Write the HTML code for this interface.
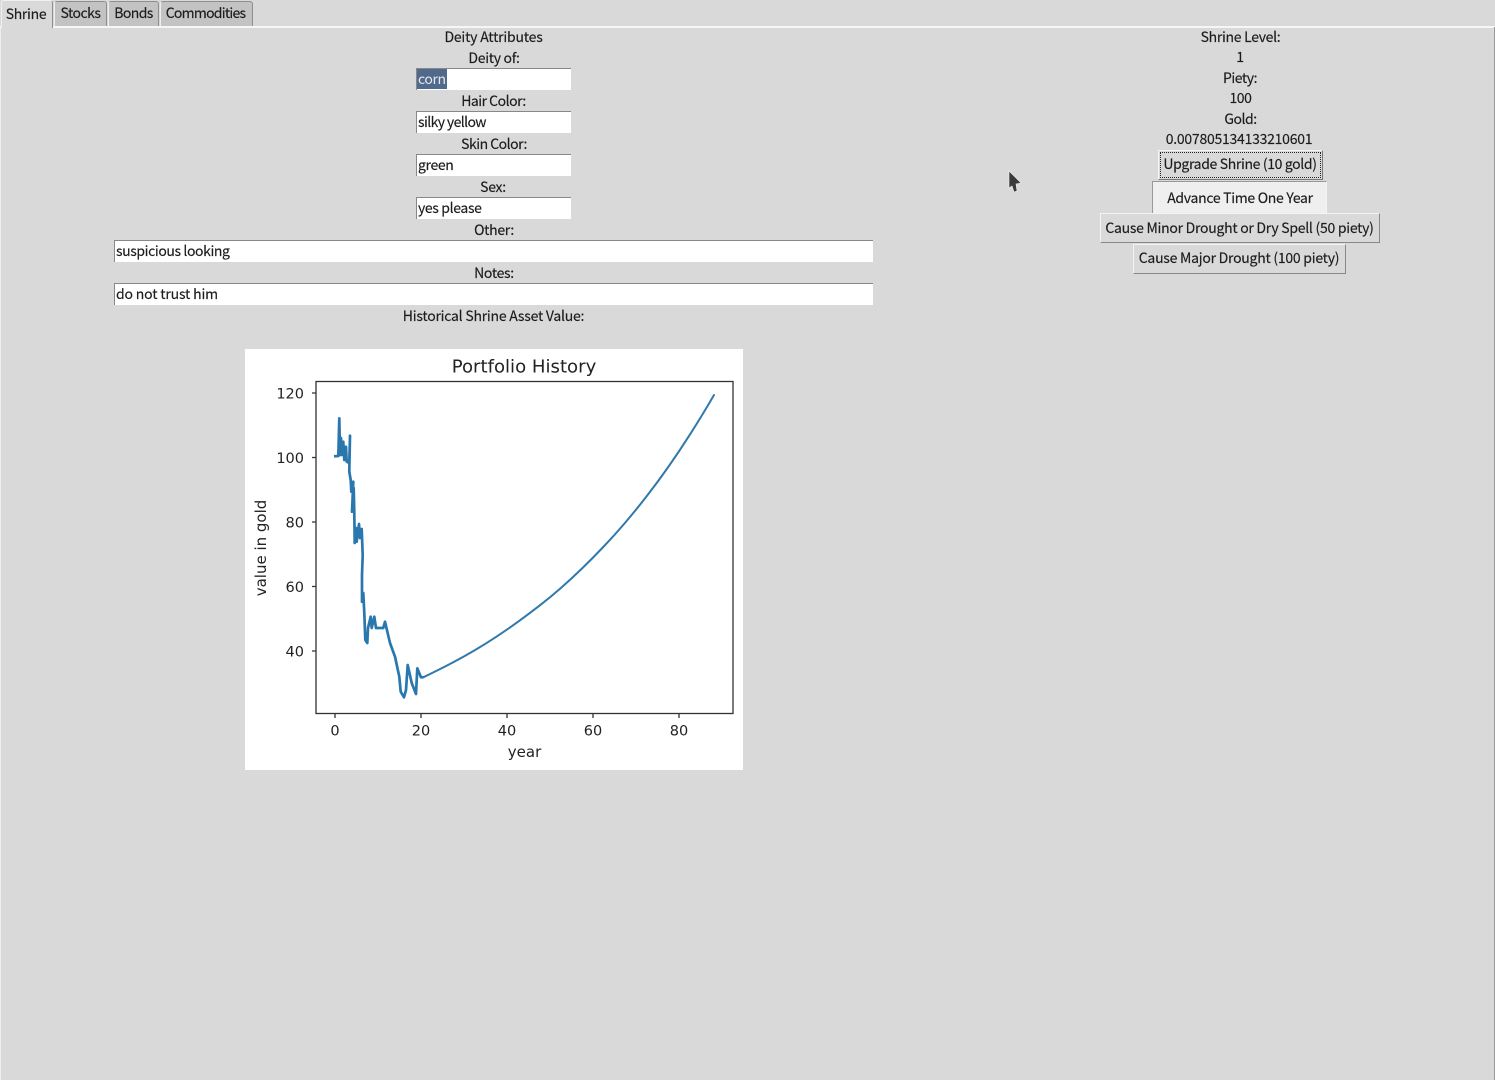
<!DOCTYPE html>
<html><head><meta charset="utf-8"><style>
html,body{margin:0;padding:0;width:1495px;height:1080px;overflow:hidden;background:#d9d9d9}
body{position:relative;font-family:"Noto Sans CJK JP","Liberation Sans",sans-serif;font-size:14px;color:#1c1c1c;letter-spacing:-.3px;-webkit-text-stroke:.15px #1c1c1c;filter:blur(.3px)}
div{position:absolute;box-sizing:border-box;white-space:nowrap}
.l{text-align:center;height:20px;line-height:20px;transform:translateX(-50%)}
.e{background:#fff;border-top:1px solid #888;border-left:1px solid #888;height:22px;line-height:20px;padding-left:1px}
.t{top:1px;height:25px;background:#c3c3c3;border:1px solid #8e8e8e;border-bottom:0;border-left-color:#eee;border-radius:3px 3px 0 0;line-height:23px;text-align:center}
.b{background:#d9d9d9;border:1px solid;border-color:#f4f4f4 #888 #888 #f4f4f4;text-align:center;line-height:26px}
svg text{-webkit-text-stroke:0;letter-spacing:0}
</style></head><body>
<div style="left:0;top:26px;width:1495px;height:2px;background:#f6f6f6"></div>
<div style="left:0;top:27px;width:1px;height:1053px;background:#eee"></div>
<div style="left:1494px;top:27px;width:1px;height:1053px;background:#999"></div>
<div class="t" style="left:1px;width:52px;top:0;height:28px;background:#d9d9d9;border-color:#f0f0f0 #8e8e8e #d9d9d9 #f0f0f0;line-height:26px;padding-right:2px">Shrine</div>
<div class="t" style="left:54px;width:53px;letter-spacing:-.5px">Stocks</div>
<div class="t" style="left:108px;width:51px;letter-spacing:-.6px">Bonds</div>
<div class="t" style="left:160px;width:93px;letter-spacing:-.75px;padding-right:2px">Commodities</div>

<div class="l" style="left:493.5px;top:27px;letter-spacing:-.2px">Deity Attributes</div>
<div class="l" style="left:494px;top:47.5px;letter-spacing:-.3px">Deity of:</div>
<div class="e" style="left:416px;top:68px;width:155px"><span style="background:#4f6a8c;color:#e8e8e8;-webkit-text-stroke:0;display:inline-block;margin-left:-1px;padding:0 1px;height:20px;line-height:20px;letter-spacing:-.4px">corn</span></div>
<div class="l" style="left:493.5px;top:91px;letter-spacing:-.5px">Hair Color:</div>
<div class="e" style="left:416px;top:111px;width:155px;letter-spacing:-.6px">silky yellow</div>
<div class="l" style="left:494px;top:134px;letter-spacing:-.5px">Skin Color:</div>
<div class="e" style="left:416px;top:154px;width:155px;letter-spacing:-.35px">green</div>
<div class="l" style="left:493px;top:177px">Sex:</div>
<div class="e" style="left:416px;top:197px;width:155px;letter-spacing:-.35px">yes please</div>
<div class="l" style="left:494px;top:220px">Other:</div>
<div class="e" style="left:114px;top:240px;width:758.5px;letter-spacing:-.4px">suspicious looking</div>
<div class="l" style="left:494px;top:263px">Notes:</div>
<div class="e" style="left:114px;top:283px;width:758.5px;letter-spacing:-.17px">do not trust him</div>
<div class="l" style="left:493.5px;top:306px;letter-spacing:-.23px">Historical Shrine Asset Value:</div>

<div class="l" style="left:1240.5px;top:27px;letter-spacing:-.3px">Shrine Level:</div>
<div class="l" style="left:1240px;top:47px">1</div>
<div class="l" style="left:1240px;top:68px;letter-spacing:-.45px">Piety:</div>
<div class="l" style="left:1240.5px;top:88px;letter-spacing:-.4px">100</div>
<div class="l" style="left:1240.5px;top:109px;letter-spacing:-.5px">Gold:</div>
<div class="l" style="left:1239px;top:129px;letter-spacing:-.25px">0.007805134133210601</div>
<div class="b" style="left:1158px;top:150px;width:165px;height:30px;line-height:26px;border:1px solid #666;border-color:#f4f4f4 #777 #777 #f4f4f4;letter-spacing:-.35px;padding-right:1px">Upgrade Shrine (10 gold)<div style="left:1px;top:1px;right:1px;bottom:1px;border:1px dotted #222"></div></div>
<div class="b" style="left:1152px;top:181px;width:175px;height:33px;line-height:33px;background:#efefef;border-color:#999 #f4f4f4 #f4f4f4 #999;letter-spacing:-.3px;padding-left:1px">Advance Time One Year</div>
<div class="b" style="left:1100px;top:213px;width:280px;height:30px;line-height:28px;letter-spacing:-.27px;padding-right:1px">Cause Minor Drought or Dry Spell (50 piety)</div>
<div class="b" style="left:1133px;top:244px;width:213px;height:30px;line-height:27px;letter-spacing:-.25px;padding-right:1px">Cause Major Drought (100 piety)</div>

<svg style="position:absolute;left:0;top:0" width="1495" height="1080" viewBox="0 0 1495 1080">
<rect x="245" y="349" width="498" height="421" fill="#fff"/>
<g font-family="'DejaVu Sans','Liberation Sans',sans-serif" fill="#222">
<text x="524" y="372.5" font-size="18.1" text-anchor="middle">Portfolio History</text>
<g font-size="14.5" text-anchor="end">
<text x="304" y="398.5">120</text><text x="304" y="463">100</text><text x="304" y="527.5">80</text><text x="304" y="592">60</text><text x="304" y="656.5">40</text>
</g>
<g font-size="14.5" text-anchor="middle">
<text x="335" y="735.5">0</text><text x="421" y="735.5">20</text><text x="507" y="735.5">40</text><text x="593" y="735.5">60</text><text x="679" y="735.5">80</text>
<text x="524.5" y="757" font-size="15">year</text>
<text transform="translate(266 548) rotate(-90)" font-size="15">value in gold</text>
</g>
</g>
<g stroke="#333" stroke-width="1.3" fill="none">
<rect x="316" y="381.5" width="417" height="332"/>
<path d="M316 393h-4M316 457.5h-4M316 522h-4M316 586.5h-4M316 651h-4M335 714v4M421 714v4M507 714v4M593 714v4M679 714v4"/>
</g>
<polyline fill="none" stroke="#2a77ae" stroke-width="2.7" stroke-linejoin="round" points="334,456.3 338.3,456 339.3,418.3 340,455 341,438 341.7,455 343.3,441.7 344.3,460 346,446.7 346.7,461.7 349.3,463 350,435.7 349.3,471.7 350.7,480 351.3,491.7 353.3,481.7 352,511.7 353.7,488 354.3,513 354.7,543 356,528 356.7,541.7 359,524 360,538 361.7,529 362.7,555 362,575 362,601.7 363.3,593 364.3,613 365.3,640 367.3,643 368,628 370.7,616.7 371.7,628 374.3,616.7 376,628 383.3,628 385,621.7 390,643 395,656.7 399.3,676.7 400.7,691.7 404,697.3 406,690 407.7,665 411.7,683 416,694 417.3,668.3 421,677.3 423.3,677.3"/>
<path fill="none" stroke="#3079ac" stroke-width="2" stroke-linecap="round" d="M423.3 677.3Q442.5 668 453.25 662.25Q464 656.5 474.75 650.2Q485.5 643.9 496.25 636.8Q507 629.7 517.75 621.95Q528.5 614.2 539.25 605.85Q550 597.5 560.75 588.1Q571.5 578.7 582.25 568.25Q593 557.8 603.75 546.5Q614.5 535.2 625.25 522.6Q636 510 646.75 496.15Q657.5 482.3 668.25 467Q679 451.7 689.75 434.8Q700.5 417.9 707.25 406.45L714 395"/>
<path d="M1009 171l12 12-5 1 1 7-3 1-2-6-3 2z" fill="#3a3a3a" stroke="#eee" stroke-width=".6"/>
</svg>
</body></html>
